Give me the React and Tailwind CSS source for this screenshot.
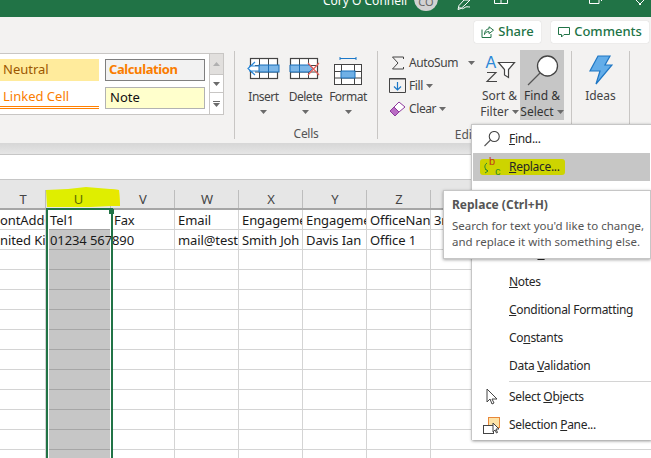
import React from "react";

const Caret = ({ cls = "" }) => (
  <svg width="7" height="4" viewBox="0 0 7 4" className={cls}><path d="M0 0h7L3.5 4z" fill="#6b6b6b" /></svg>
);

const InsertIcon = () => (
  <svg width="34" height="24" viewBox="0 0 34 24" fill="none">
    <rect x="3.5" y="1.5" width="27" height="20" stroke="#444" strokeWidth="1.2" fill="#fff" />
    <path d="M12.5 1.5v20M21.5 1.5v20M3.5 8.5h27M3.5 15h27" stroke="#444" />
    <rect x="12" y="8" width="20" height="7" fill="#7db7e8" stroke="#1b6fb8" />
    <path d="M21.5 8v7" stroke="#1b6fb8" />
    <path d="M8 5L1 11.5 8 18M2 9h11M2 14h11" fill="#fff" stroke="#2b88d8" strokeWidth="1.2" />
  </svg>
);
const DeleteIcon = () => (
  <svg width="34" height="24" viewBox="0 0 34 24" fill="none">
    <rect x="1.5" y="1.5" width="27" height="20" stroke="#444" strokeWidth="1.2" fill="#fff" />
    <path d="M10.5 1.5v20M19.5 1.5v20M1.5 8.5h27M1.5 15h27" stroke="#444" />
    <path d="M1 8h19l4 3.5-4 3.5H1z" fill="#7db7e8" stroke="#1b6fb8" />
    <path d="M10.5 8v7" stroke="#1b6fb8" />
    <path d="M19 6l11 12M30 6L19 18" stroke="#e8605a" strokeWidth="1.2" />
  </svg>
);
const FormatIcon = () => (
  <svg width="30" height="28" viewBox="0 0 30 28" fill="none">
    <path d="M7 1.5h16M7 0v3M23 0v3" stroke="#1b78c8" />
    <rect x="1.5" y="7.5" width="27" height="20" stroke="#444" fill="#fff" />
    <path d="M8.5 7.5v20M21.5 7.5v20M1.5 14.5h27M1.5 21h27" stroke="#444" />
    <rect x="8" y="14" width="14" height="7" fill="#6fb0e6" stroke="#1b6fb8" />
  </svg>
);
const SumIcon = () => (
  <svg width="14" height="14" viewBox="0 0 14 14" fill="none"><path d="M12.5 3V1H1.5L7 7 1.5 13h11v-2" stroke="#444" strokeWidth="1" /></svg>
);
const FillIcon = () => (
  <svg width="17" height="15" viewBox="0 0 17 15" fill="none">
    <path d="M.5 14.5V.5h16v14z" stroke="#444" /><path d="M.5.5h16" stroke="#444" strokeWidth="2" />
    <path d="M8.5 4v8M5 8.5l3.5 3.5L12 8.5" stroke="#1b78c8" strokeWidth="1.2" />
  </svg>
);
const EraserIcon = () => (
  <svg width="17" height="16" viewBox="0 0 17 16" fill="none">
    <path d="M1 10l5 5 4-4-5-5z" fill="#b96cc4" stroke="#8e3a9d" />
    <path d="M5 6l5-5 6 5-6 5z" fill="#fff" stroke="#8e3a9d" />
  </svg>
);
const SortIcon = () => (
  <svg width="32" height="28" viewBox="0 0 32 28">
    <text x="1.5" y="13" fontSize="16" fill="#2b88d8" fontFamily="Liberation Sans">A</text>
    <path d="M3 17.5h9L3 26.5h10" stroke="#444" fill="none" strokeWidth="1.1" />
    <path d="M14.5 7.5h16l-6 7v8l-4-2.5v-5.5z" fill="#fff" stroke="#444" strokeWidth="1.2" />
  </svg>
);
const Magnifier = ({ s = 32, w = 1.3 }) => (
  <svg width={s} height={s} viewBox="0 0 32 32" fill="none">
    <circle cx="20.5" cy="11" r="10" fill="#fff" stroke="#444" strokeWidth={w} />
    <path d="M13 18L1 30" stroke="#555" strokeWidth={w} />
  </svg>
);
const Bolt = () => (
  <svg width="24" height="30" viewBox="0 0 24 30" fill="none">
    <path d="M9 1h12l-5 9h7L7 29l4-13H1z" fill="#63ade9" stroke="#1f77c4" strokeWidth="1.2" />
  </svg>
);

const Big = ({ icon, label, w = "w-[42px]" }) => (
  <div className={`flex flex-col items-center ${w}`}>
    <div className="h-[33px] mt-[4px] flex items-start justify-center">{icon}</div>
    <div className="leading-[16px] mt-[-1px] whitespace-nowrap tracking-[-0.5px]">{label}</div>
    <Caret cls="mt-[5px]" />
  </div>
);

const Small = ({ icon, label, extra }) => (
  <div className="h-[23px] flex items-center gap-[3px] whitespace-nowrap tracking-[-0.4px]">
    <div className="w-[17px] flex justify-center">{icon}</div>
    <span>{label}</span>
    {extra}
  </div>
);

const Sep = () => <div className="w-px h-[88px] mt-[1px] bg-[#c8c6c4] shrink-0" />;

const columns = ["T", "U", "V", "W", "X", "Y", "Z", ""];
const gridCols = "grid grid-cols-[46px_65px_64px_64px_64px_64px_64px_1fr]";
const row1 = ["ontAddC", "Tel1", "Fax", "Email", "Engageme", "Engageme", "OfficeNan", "3r"];
const row2 = ["nited Kin", "01234 567890", "", "mail@test", "Smith Joh", "Davis Ian", "Office 1", ""];
const blank = ["", "", "", "", "", "", "", ""];
const rows = [row1, row2, ...Array.from({ length: 11 }, () => blank)];

const MenuRow = ({ icon, active, children }) => (
  <div className={`relative h-[28px] flex items-center mx-px ${active ? "bg-[#c6c6c6]" : ""}`}>
    {active && <div className="absolute left-[7px] top-[6px] w-[85px] h-[16px] rounded-[3px] bg-[#cdd400]" />}
    <div className="relative w-[36px] flex justify-center shrink-0 pl-[2px]">{icon}</div>
    <div className="relative text-[#262626] whitespace-nowrap tracking-[-0.3px]">{children}</div>
  </div>
);

export default function App() {
  return (
    <div className="relative w-[651px] h-[458px] overflow-hidden bg-white font-['Noto_Sans',sans-serif] text-[12px] text-[#444]">
      {/* title bar */}
      <div className="h-[17px] bg-[#217346] flex items-start overflow-hidden text-white">
        <div className="ml-[323px] mt-[-7px] leading-[16px] w-[91px] whitespace-nowrap">Cory O Connell</div>
        <div className="w-[24px] h-[24px] mt-[-13px] rounded-full bg-[#d2d2d2] text-[#666] flex items-center justify-center text-[11px] pt-[6px] shrink-0">CO</div>
        <svg width="16" height="10" viewBox="0 0 16 10" className="ml-[18px] shrink-0" fill="none"><path d="M5 8.5l-3 1 1-4L8 0h6l-5 5zM3 8c3-1 2 2 5 0s3-1 6-1" stroke="#fff" /></svg>
        <svg width="14" height="4" viewBox="0 0 14 4" className="ml-[22px] shrink-0" fill="none"><path d="M.5 0v3.5h13V0M7 0v3.5" stroke="#fff" /></svg>
        <svg width="14" height="4" viewBox="0 0 14 4" className="ml-[81px] shrink-0" fill="none"><path d="M.5 0v3.5H10V0M12.5 0v1" stroke="#fff" /></svg>
        <svg width="11" height="6" viewBox="0 0 11 6" className="ml-[31px] shrink-0" fill="none"><path d="M2 0l5 5M10 0L5 5" stroke="#fff" /></svg>
      </div>

      {/* ribbon */}
      <div className="h-[126px] bg-[#f3f2f1] flex flex-col">
        <div className="h-[33px] pt-[4px] pr-[2px] flex justify-end gap-[10px] text-[13px] font-medium text-[#217346]">
          <div className="h-[22px] w-[67px] bg-white rounded-[2px] flex items-center justify-center gap-[4px] shadow-[0_0_1px_#bbb]">
            <svg width="13" height="12" viewBox="0 0 13 12" fill="none"><path d="M8 .8l4.5 3.4L8 7.6V5.6C5 5.6 4 7 3.5 8.5 3.5 5.5 5 3 8 2.8zM1 3.5V11.5h9V8" stroke="#217346" /></svg>
            Share
          </div>
          <div className="h-[22px] w-[98px] bg-white rounded-[2px] flex items-center justify-center gap-[4px] shadow-[0_0_1px_#bbb]">
            <svg width="12" height="11" viewBox="0 0 12 11" fill="none"><path d="M.5.5h11v7H6L3.5 10V7.5h-3z" stroke="#217346" /></svg>
            Comments
          </div>
        </div>
        <div className="flex items-start h-[93px]">
          {/* styles gallery */}
          <div className="mt-[3px] w-[224px] h-[62px] shrink-0 bg-white border border-[#c8c6c4] border-l-0 flex">
            <div className="w-[209px] grid grid-cols-[99px_100px] auto-rows-[22px] content-start gap-x-[6px] gap-y-[6px] pt-[5px]">
              <div className="h-[22px] bg-[#ffeb9c] text-[#9c5700] text-[13px] pl-[3px] flex items-center">Neutral</div>
              <div className="h-[22px] bg-[#f2f2f2] border border-[#7f7f7f] text-[#fa7d00] text-[13px] font-bold pl-[3px] flex items-center tracking-[-0.4px]">Calculation</div>
              <div className="h-[22px] border-b-[3px] border-double border-[#ff8001] text-[#fa7d00] text-[13px] pl-[3px] flex items-center">Linked Cell</div>
              <div className="h-[22px] bg-[#ffffcc] border border-[#b2b2b2] text-[#111] text-[13px] pl-[4px] flex items-center">Note</div>
            </div>
            <div className="w-[14px] flex flex-col border-l border-[#c8c6c4]">
              <div className="h-[20px] bg-[#e1dfdd] flex items-center justify-center"><svg width="7" height="4"><path d="M0 4h7L3.5 0z" fill="#b0b0b0" /></svg></div>
              <div className="h-[19px] border-y border-[#c8c6c4] flex items-center justify-center"><Caret /></div>
              <div className="flex-1 flex flex-col items-center justify-center gap-[1px]"><div className="w-[7px] h-px bg-[#6b6b6b]" /><Caret /></div>
            </div>
          </div>
          <div className="w-[10px] shrink-0" />
          <Sep />
          {/* cells */}
          <div className="w-[142px] h-[92px] shrink-0 flex flex-col items-center">
            <div className="flex h-[73px] pt-[3px]">
              <Big icon={<InsertIcon />} label="Insert" />
              <Big icon={<DeleteIcon />} label="Delete" />
              <Big icon={<FormatIcon />} label="Format" w="w-[43px]" />
            </div>
            <div className="mt-[9px] leading-[16px] text-[#555] tracking-[-0.3px]">Cells</div>
          </div>
          <Sep />
          {/* editing */}
          <div className="w-[193px] h-[92px] shrink-0 flex flex-col items-center relative">
            <div className="flex w-full h-[74px]">
              <div className="w-[101px] pl-[11px] pt-[1px] flex flex-col">
                <Small icon={<SumIcon />} label="AutoSum" extra={<Caret cls="ml-[7px]" />} />
                <Small icon={<FillIcon />} label="Fill" extra={<Caret />} />
                <Small icon={<EraserIcon />} label="Clear" extra={<Caret />} />
              </div>
              <div className="w-[41px] flex flex-col items-center pt-[5px]">
                <div className="h-[34px]"><SortIcon /></div>
                <div className="leading-[16px] whitespace-nowrap mt-[-1px]">Sort &amp;</div>
                <div className="leading-[16px] whitespace-nowrap flex items-center gap-[3px]">Filter <Caret /></div>
              </div>
              <div className="w-[44px] bg-[#c6c6c6] flex flex-col items-center pt-[5px]">
                <div className="h-[34px] pl-[2px]"><Magnifier /></div>
                <div className="leading-[16px] whitespace-nowrap mt-[-1px] text-[#333]">Find &amp;</div>
                <div className="leading-[16px] whitespace-nowrap flex items-center gap-[3px] text-[#333]">Select <Caret /></div>
              </div>
            </div>
            <div className="mt-[7px] leading-[16px] text-[#555]">Editing</div>
          </div>
          <Sep />
          <div className="w-[57px] shrink-0 flex flex-col items-center pt-[5px]">
            <div className="h-[34px]"><Bolt /></div>
            <div className="leading-[16px] mt-[-1px]">Ideas</div>
          </div>
          <Sep />
        </div>
      </div>

      {/* formula strip */}
      <div className="h-[12px] bg-gradient-to-b from-[#d6d6d6] to-[#e6e6e6] border-b border-[#c6c6c6]" />
      <div className="h-[25px] bg-white border-b border-[#c6c6c6]" />

      {/* sheet */}
      <div className="relative">
        <div className={`${gridCols} h-[30px] bg-[#e6e6e6] border-b-2 border-[#a6a6a6] text-[13px] leading-[18px] text-[#444]`}>
          {columns.map((c, i) => (
            <div key={i} className="relative flex items-end justify-center">
              {c}
              {i < 7 && <div className="absolute right-0 bottom-0 w-px h-[18px] bg-[#bdbdbd]" />}
            </div>
          ))}
        </div>
        {rows.map((r, ri) => (
          <div key={ri} className={`${gridCols} h-[20px] text-[13px] tracking-[-0.1px] text-[#1a1a1a]`}>
            {r.map((t, ci) =>
              ci === 1 ? (
                <div key={ci} className="h-[20px] whitespace-nowrap">
                  <div className={`h-[20px] ml-[3px] mr-px pl-px leading-[20px] border-b border-[#a6a6a6] ${ri === 0 ? "bg-white" : "bg-[#c6c6c6]"}`}>{t}</div>
                </div>
              ) : (
                <div key={ci} className={`h-[20px] border-b border-[#d4d4d4] leading-[20px] whitespace-nowrap overflow-hidden ${ci < 7 ? "border-r" : ""} ${ci === 0 ? "" : "pl-[3px]"}`}>{t}</div>
              )
            )}
          </div>
        ))}
        {/* selection frame */}
        <div className="absolute left-[46px] top-[28px] w-[67px] h-[260px] border-x-2 border-t-2 border-[#217346]" />
        <div className="absolute left-[109px] top-[29px] w-[5px] h-[5px] bg-[#217346]" />
        {/* highlighter */}
        <svg width="74" height="21" viewBox="0 0 74 21" className="absolute left-[46px] top-[7px]">
          <path d="M0 3l22-1 18-2 24 2 9 1 1 16-9 0-20 1H1z" fill="#dfee00" />
          <path d="M64 2l9 1 1 16-10 0z" fill="#e8e800" />
        </svg>
        <div className="absolute left-[46px] top-[10px] w-[65px] text-center text-[13px] leading-[18px] text-[#5b6b00]">U</div>
      </div>

      {/* dropdown */}
      <div className="absolute left-[471px] top-[124px] w-[180px] h-[316px] bg-white border-t border-l border-[#c6c6c6] shadow-[1px_1px_3px_rgba(0,0,0,0.45)]">
        <MenuRow icon={<Magnifier s={16} w={2.2} />}><u>F</u>ind...</MenuRow>
        <MenuRow active icon={
          <svg width="24" height="22" viewBox="0 0 24 22">
            <text x="9" y="9" fontSize="11" fill="#c0391b" fontFamily="Liberation Sans">b</text>
            <text x="15" y="19" fontSize="11" fill="#2e8b2e" fontFamily="Liberation Sans">c</text>
            <path d="M7 7c-3 2-3 6 1 8M5 13l3 2-3 2" stroke="#2e8b2e" fill="none" />
          </svg>
        }>
          <u>R</u>eplace...
        </MenuRow>
        <MenuRow icon={<svg width="14" height="14" viewBox="0 0 14 14" fill="none"><path d="M2 12L10 3M5 3h5v5" stroke="#2b88d8" /></svg>}><u>G</u>o To...</MenuRow>
        <MenuRow>Go To <u>S</u>pecial...</MenuRow>
        <div className="h-[3px]" />
        <MenuRow>Form<u>u</u>las</MenuRow>
        <MenuRow><u>N</u>otes</MenuRow>
        <MenuRow><u>C</u>onditional Formatting</MenuRow>
        <MenuRow>Co<u>n</u>stants</MenuRow>
        <MenuRow>Data <u>V</u>alidation</MenuRow>
        <div className="h-[3px] flex items-start ml-[37px]"><div className="w-full h-px bg-[#d4d4d4] mt-px" /></div>
        <MenuRow icon={<svg width="12" height="18" viewBox="0 0 12 18" fill="none"><path d="M1 1v13l3-3 2 5 2-1-2-4h5z" fill="#fff" stroke="#444" /></svg>}>Select <u>O</u>bjects</MenuRow>
        <MenuRow icon={
          <svg width="18" height="17" viewBox="0 0 18 17" fill="none">
            <rect x="5.5" y=".5" width="11" height="10" fill="#fde3a7" stroke="#e8873a" />
            <rect x=".5" y="8.5" width="10" height="8" fill="#fff" stroke="#444" />
            <path d="M10 6v9l2-2 1.5 3 1-.5L13 12h3z" fill="#fff" stroke="#444" />
          </svg>
        }>Selection <u>P</u>ane...</MenuRow>
      </div>

      {/* tooltip */}
      <div className="absolute left-[443px] top-[190px] w-[208px] h-[69px] bg-white border border-[#c6c6c6] shadow-[0_1px_3px_rgba(0,0,0,0.35)] pl-[8px] pt-[6px] text-[#555]">
        <div className="font-bold leading-[16px] whitespace-nowrap">Replace (Ctrl+H)</div>
        <div className="mt-[5px] leading-[16px] text-[11.5px] whitespace-nowrap">Search for text you'd like to change,</div>
        <div className="leading-[16px] text-[11.5px] whitespace-nowrap">and replace it with something else.</div>
      </div>
    </div>
  );
}
